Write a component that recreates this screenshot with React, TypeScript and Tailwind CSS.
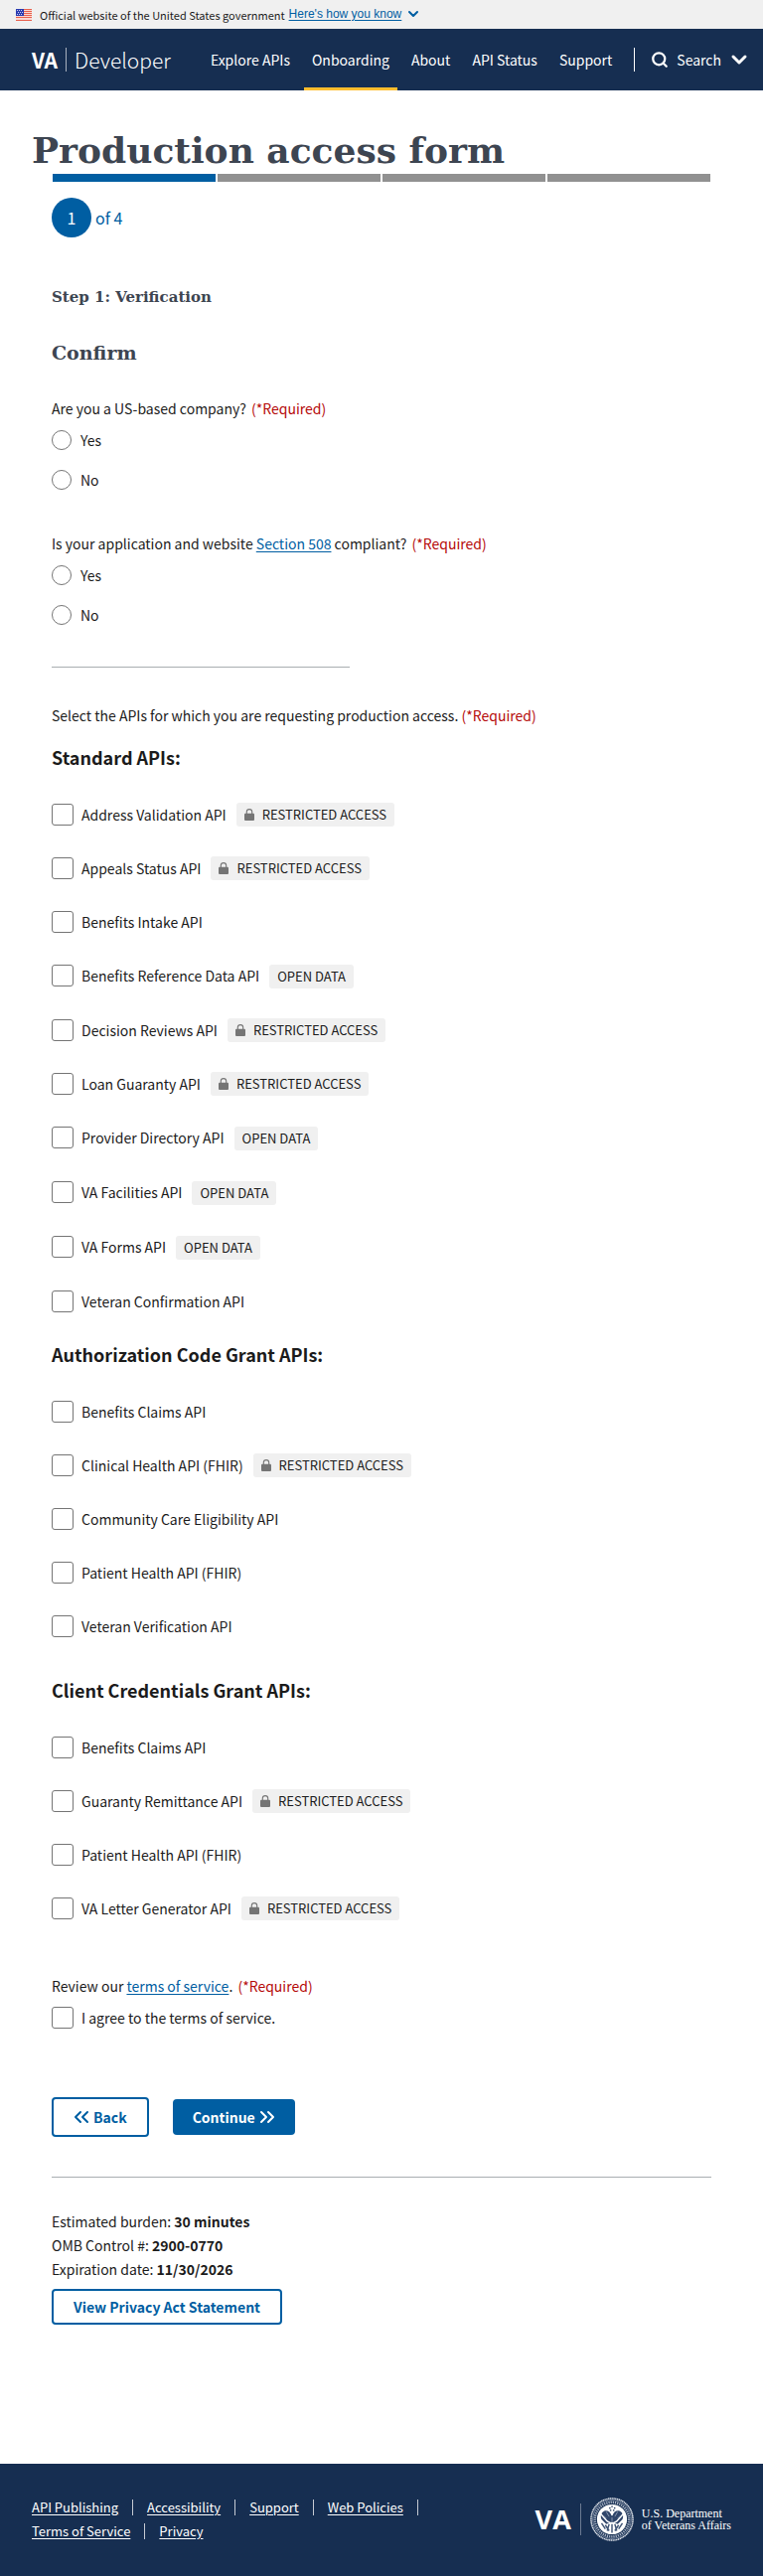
import React from 'react';
import { ChevronDown, Search, ChevronsLeft, ChevronsRight } from 'lucide-react';

type Access = 'restricted' | 'open';
type Api = { name: string; access?: Access };

const standardApis: Api[] = [
  { name: 'Address Validation API', access: 'restricted' },
  { name: 'Appeals Status API', access: 'restricted' },
  { name: 'Benefits Intake API' },
  { name: 'Benefits Reference Data API', access: 'open' },
  { name: 'Decision Reviews API', access: 'restricted' },
  { name: 'Loan Guaranty API', access: 'restricted' },
  { name: 'Provider Directory API', access: 'open' },
  { name: 'VA Facilities API', access: 'open' },
  { name: 'VA Forms API', access: 'open' },
  { name: 'Veteran Confirmation API' },
];

const authCodeApis: Api[] = [
  { name: 'Benefits Claims API' },
  { name: 'Clinical Health API (FHIR)', access: 'restricted' },
  { name: 'Community Care Eligibility API' },
  { name: 'Patient Health API (FHIR)' },
  { name: 'Veteran Verification API' },
];

const clientApis: Api[] = [
  { name: 'Benefits Claims API' },
  { name: 'Guaranty Remittance API', access: 'restricted' },
  { name: 'Patient Health API (FHIR)' },
  { name: 'VA Letter Generator API', access: 'restricted' },
];

function FlagIcon() {
  return (
    <svg className="h-3 w-4 shrink-0" viewBox="0 0 16 12" aria-hidden="true">
      <rect width="16" height="12" fill="#fbd9d3" />
      {[0, 2, 4, 6, 8, 11].map((y) => (
        <rect key={y} y={y} width="16" height="1" fill="#e8604d" />
      ))}
      <rect width="8" height="7" fill="#2a3bb0" />
      {[1, 3, 5].map((y) =>
        [1, 3, 5].map((x) => (
          <rect key={`${x}-${y}`} x={x + (y === 3 ? 1 : 0)} y={y} width="1" height="1" fill="#c9cdf0" />
        )),
      )}
    </svg>
  );
}

function LockIcon() {
  return (
    <svg className="h-3 w-[10px] shrink-0" viewBox="0 0 10 12" aria-hidden="true">
      <path d="M2.300 6V3.300a2.700 2.700 0 0 1 5.400 0V6" fill="none" stroke="#757575" strokeWidth="1.100" />
      <rect y="4.800" width="10" height="7.200" rx="1" fill="#757575" />
    </svg>
  );
}

function Seal() {
  return (
    <svg className="h-11 w-11 shrink-0" viewBox="0 0 46 46" aria-hidden="true">
      <circle cx="23" cy="23" r="22" fill="none" stroke="#dfe3ea" strokeWidth="1.600" strokeDasharray="1.400 .5" />
      <circle cx="23" cy="23" r="20.200" fill="none" stroke="#9aa6ba" strokeWidth=".8" />
      <circle cx="23" cy="23" r="18" fill="none" stroke="#aab4c5" strokeWidth="2.600" strokeDasharray="1.300 1" />
      <circle cx="23" cy="23" r="15.800" fill="#fff" />
      <path
        d="M22.500 19c-1-4-4.500-6-7.500-5-3.500 1.500-4.500 5.500-3 9l5 5 5-2h2l5 2 5-5c1.500-3.500.5-7.500-3-9-3-1-6.500 1-7.500 5z"
        fill="#2f456a"
      />
      <path d="M10 16l8 9 4 2M36 16l-8 9-4 2" fill="none" stroke="#fff" strokeWidth="1.500" />
      <path d="M17 15l3 5M29 15l-3 5M14 19l3 3M32 19l-3 3M23 21v4" stroke="#8c9ab0" strokeWidth="1" />
      <path
        d="M12 27l4 6M34 27l-4 6M16 29l4 6M30 29l-4 6M20 28l-2 7M26 28l2 7M23 28v9"
        fill="none"
        stroke="#3f5475"
        strokeWidth="1.500"
      />
      <path d="M20 11h1.500M22.300 9.500h1.500M25 11h1.500M20.800 13.500h1.500M24 13.500h1.500" stroke="#172e51" strokeWidth="1.300" />
    </svg>
  );
}

function Required() {
  return <span className="text-[#b50909]">(*Required)</span>;
}

function Badge({ access }: { access: Access }) {
  return (
    <span className="ml-[2px] flex h-6 items-center gap-2 self-end rounded-[3px] bg-[#f0f0f0] px-2 text-[13px]">
      {access === 'restricted' && <LockIcon />}
      {access === 'restricted' ? 'RESTRICTED ACCESS' : 'OPEN DATA'}
    </span>
  );
}

const boxClass =
  'm-0 mt-px h-[22px] w-[22px] shrink-0 appearance-none rounded-[3px] border border-[#757575] bg-white checked:bg-[#005ea2]';

function ApiGroup({ title, apis, prefix }: { title: string; apis: Api[]; prefix: string }) {
  return (
    <fieldset>
      <legend className="text-[18px] leading-6 font-bold">{title}</legend>
      <div className="flex flex-col gap-[30px] pt-[34px]">
        {apis.map((api, i) => (
          <div key={api.name} className={api.access === 'open' ? 'flex h-[25px] gap-2' : 'flex h-6 gap-2'}>
            <input id={`${prefix}-${i}`} type="checkbox" className={boxClass} />
            <label htmlFor={`${prefix}-${i}`}>{api.name}</label>
            {api.access && <Badge access={api.access} />}
          </div>
        ))}
      </div>
    </fieldset>
  );
}

function YesNo({ name, children }: { name: string; children: React.ReactNode }) {
  return (
    <fieldset>
      <legend>{children}</legend>
      <div className="flex flex-col gap-4 pt-2">
        {['Yes', 'No'].map((option) => (
          <div key={option} className="flex h-6 items-center gap-[9px]">
            <input
              id={`${name}-${option}`}
              name={name}
              type="radio"
              className="m-0 h-5 w-5 appearance-none rounded-full border border-[#757575] bg-white checked:bg-[#005ea2]"
            />
            <label htmlFor={`${name}-${option}`}>{option}</label>
          </div>
        ))}
      </div>
    </fieldset>
  );
}

const linkClass = 'text-[#005ea2] underline underline-offset-2';
const slab = "font-['DejaVu_Serif',serif] font-bold text-[#3d4551]";

export default function App() {
  const footerLinks = ['API Publishing', 'Accessibility', 'Support', 'Web Policies', 'Terms of Service', 'Privacy'];
  return (
    <div className="bg-white font-['Noto_Sans_CJK_SC',sans-serif] text-[14px] leading-6 text-[#1b1b1b]">
      <div className="flex h-[29px] items-center bg-[#f0f0f0] px-4 text-[11px]">
        <FlagIcon />
        <p className="pl-2">Official website of the United States government</p>
        <button className="flex items-center gap-1 pb-[2px] pl-1 font-['Liberation_Sans',sans-serif] text-[12px] text-[#005ea2]">
          <span className="underline underline-offset-2">Here's how you know</span>
          <ChevronDown className="h-4 w-4" strokeWidth={3} />
        </button>
      </div>

      <header className="flex h-[62px] items-stretch justify-between bg-[#162e51] pr-3 pl-8 text-white">
        <a href="#home" className="flex items-center text-[21px]">
          <span className="font-bold">VA</span>
          <span className="mx-2 h-6 w-px bg-[#a9b1be]" />
          <span className="font-light">Developer</span>
        </a>
        <div className="flex items-stretch">
          <nav className="flex items-stretch gap-[6px]">
            {['Explore APIs', 'Onboarding', 'About', 'API Status', 'Support'].map((item) => (
              <a
                key={item}
                href={`#${item}`}
                className={
                  item === 'Onboarding'
                    ? 'flex items-center border-y-[3px] border-t-transparent border-b-[#ffbe2e] px-2'
                    : 'flex items-center px-2'
                }
              >
                {item}
              </a>
            ))}
          </nav>
          <span className="mr-3 ml-[14px] h-6 w-px self-center bg-white" />
          <button className="flex items-center pl-1">
            <Search className="mr-2 h-[18px] w-[18px]" strokeWidth={3} />
            Search
            <ChevronDown className="ml-[6px] h-6 w-6" strokeWidth={3} />
          </button>
        </div>
      </header>

      <main className="px-8 pt-9 pb-[140px]">
        <h1 className={`${slab} text-[36px] leading-[48px]`}>Production access form</h1>
        <form className="px-5" onSubmit={(e) => e.preventDefault()}>
          <div className="flex gap-[2px] px-px">
            <span className="h-2 flex-1 bg-[#005ea2]" />
            <span className="h-2 flex-1 bg-[#919191]" />
            <span className="h-2 flex-1 bg-[#919191]" />
            <span className="h-2 flex-1 bg-[#919191]" />
          </div>
          <p className="flex items-center gap-1 pt-4 text-[16px] text-[#005ea2]">
            <span className="flex h-10 w-10 items-center justify-center rounded-full bg-[#005ea2] text-white">1</span>
            of 4
          </p>
          <h2 className={`${slab} pt-12 text-[15px]`}>Step 1: Verification</h2>
          <h3 className={`${slab} pt-8 text-[19px]`}>Confirm</h3>

          <div className="flex flex-col gap-10 pt-8">
            <YesNo name="us-based">
              Are you a US-based company? <span className="pl-[2px]"><Required /></span>
            </YesNo>
            <YesNo name="section-508">
              Is your application and website{' '}
              <a href="#508" className={linkClass}>Section 508</a> compliant?{' '}
              <span className="pl-[2px]"><Required /></span>
            </YesNo>
          </div>

          <hr className="mt-10 w-[300px] border-[#a9aeb1]" />

          <p className="pt-9 pb-[18px]">
            Select the APIs for which you are requesting production access. <Required />
          </p>
          <ApiGroup title="Standard APIs:" apis={standardApis} prefix="standard" />
          <div className="pt-[29px]">
            <ApiGroup title="Authorization Code Grant APIs:" apis={authCodeApis} prefix="auth" />
          </div>
          <div className="pt-10">
            <ApiGroup title="Client Credentials Grant APIs:" apis={clientApis} prefix="client" />
          </div>

          <p className="pt-[54px]">
            Review our <a href="#terms" className={linkClass}>terms of service</a>. <span className="pl-[2px]"><Required /></span>
          </p>
          <div className="flex gap-2 pt-2">
            <input id="agree" type="checkbox" className={boxClass} />
            <label htmlFor="agree">I agree to the terms of service.</label>
          </div>

          <div className="flex items-center gap-6 pt-[68px]">
            <button type="button" className="flex h-10 items-center rounded border-2 border-[#005ea2] pr-5 pl-4 font-bold text-[#005ea2]">
              <ChevronsLeft className="h-6 w-6" strokeWidth={2} />
              Back
            </button>
            <button type="submit" className="flex h-9 items-center rounded bg-[#005ea2] pr-4 pl-5 font-bold text-white">
              Continue
              <ChevronsRight className="h-6 w-6" strokeWidth={2} />
            </button>
          </div>

          <hr className="mt-10 border-[#a9aeb1]" />

          <div className="pt-8">
            <p>Estimated burden: <b>30 minutes</b></p>
            <p>OMB Control #: <b>2900-0770</b></p>
            <p>Expiration date: <b>11/30/2026</b></p>
          </div>
          <button type="button" className="mt-2 flex h-9 items-center rounded border-2 border-[#005ea2] px-5 font-bold text-[#005ea2]">
            View Privacy Act Statement
          </button>
        </form>
      </main>

      <footer className="flex items-center justify-between bg-[#162e51] px-8 pt-8 pb-[33px] text-white">
        <ul className="flex max-w-[420px] flex-wrap text-[13px]">
          {footerLinks.map((link, i) => (
            <li key={link} className="flex items-center">
              <a href={`#${link}`} className="underline underline-offset-2">{link}</a>
              {i < footerLinks.length - 1 && <span className="mx-[14px] h-4 w-px bg-[#c5cad3]" />}
            </li>
          ))}
        </ul>
        <a href="#va" className="flex items-center">
          <span className="font-['Open_Sans',sans-serif] text-[27px] leading-8 font-bold">VA</span>
          <span className="mx-[9px] h-8 w-px bg-[#6b7a92]" />
          <Seal />
          <span className="pl-2 font-['Liberation_Serif',serif] text-[12px] leading-3">
            U.S. Department<br />of Veterans Affairs
          </span>
        </a>
      </footer>
    </div>
  );
}
